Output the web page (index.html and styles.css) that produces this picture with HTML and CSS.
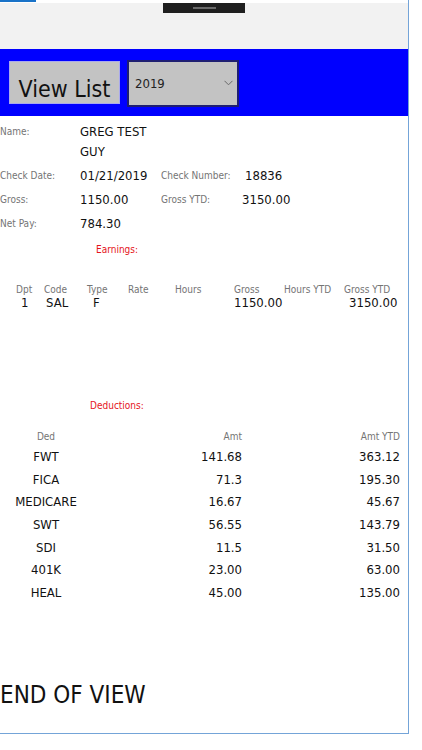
FILE: index.html
```html
<!DOCTYPE html>
<html lang="en">
<head>
<meta charset="utf-8">
<title>Pay Stub</title>
<link rel="stylesheet" href="styles.css">
</head>
<body>
<div class="window">
  <div class="topstrip"><span class="accent"></span></div>
  <div class="titlebar"><div class="handle"><span class="grip"></span></div></div>
  <div class="toolbar">
    <button class="btn">View List</button>
    <div class="select">
      <span class="select-text">2019</span>
      <svg class="chev" width="9" height="6" viewBox="0 0 9 6"><path d="M0.5 0.8 L4.5 4.8 L8.5 0.8" fill="none" stroke="#6a6a6a" stroke-width="1"/></svg>
    </div>
  </div>
  <div class="content">
    <div class="info">
      <div class="row name-row">
        <span class="lbl">Name:</span>
        <span class="val name">GREG TEST<br>GUY</span>
      </div>
      <div class="row">
        <span class="lbl">Check Date:</span>
        <span class="val">01/21/2019</span>
        <span class="lbl">Check Number:</span>
        <span class="val shift">18836</span>
      </div>
      <div class="row">
        <span class="lbl">Gross:</span>
        <span class="val">1150.00</span>
        <span class="lbl">Gross YTD:</span>
        <span class="val">3150.00</span>
      </div>
      <div class="row">
        <span class="lbl">Net Pay:</span>
        <span class="val">784.30</span>
      </div>
    </div>
    <div class="section-title earn-title">Earnings:</div>
    <div class="earn-table">
      <span class="eh">Dpt</span><span class="eh">Code</span><span class="eh">Type</span><span class="eh">Rate</span><span class="eh">Hours</span><span class="eh">Gross</span><span class="eh">Hours YTD</span><span class="eh">Gross YTD</span>
      <span class="ev c-dpt">1</span><span class="ev c-code">SAL</span><span class="ev c-type">F</span><span class="ev"></span><span class="ev"></span><span class="ev">1150.00</span><span class="ev"></span><span class="ev c-gytd">3150.00</span>
    </div>
    <div class="section-title ded-title">Deductions:</div>
    <div class="ded-table">
      <div class="drow dhead"><span class="d-name">Ded</span><span class="d-amt">Amt</span><span class="d-ytd">Amt YTD</span></div>
      <div class="drow"><span class="d-name">FWT</span><span class="d-amt">141.68</span><span class="d-ytd">363.12</span></div>
      <div class="drow"><span class="d-name">FICA</span><span class="d-amt">71.3</span><span class="d-ytd">195.30</span></div>
      <div class="drow"><span class="d-name">MEDICARE</span><span class="d-amt">16.67</span><span class="d-ytd">45.67</span></div>
      <div class="drow"><span class="d-name">SWT</span><span class="d-amt">56.55</span><span class="d-ytd">143.79</span></div>
      <div class="drow"><span class="d-name">SDI</span><span class="d-amt">11.5</span><span class="d-ytd">31.50</span></div>
      <div class="drow"><span class="d-name">401K</span><span class="d-amt">23.00</span><span class="d-ytd">63.00</span></div>
      <div class="drow"><span class="d-name">HEAL</span><span class="d-amt">45.00</span><span class="d-ytd">135.00</span></div>
    </div>
    <div class="end">END OF VIEW</div>
  </div>
</div>
</body>
</html>
```
FILE: styles.css
```css
* { box-sizing: border-box; }
html, body { margin: 0; padding: 0; background: #ffffff; }
body {
  font-family: "DejaVu Sans Condensed", "DejaVu Sans", "Liberation Sans", sans-serif;
  color: #111111;
}
.window {
  width: 409px;
  height: 734px;
  border-right: 1px solid #74a4d8;
  border-bottom: 1px solid #74a4d8;
  display: flex;
  flex-direction: column;
  overflow: hidden;
  background: #ffffff;
}
.topstrip { height: 3px; background: #ffffff; }
.accent { display: block; width: 36px; height: 2px; background: #1a73c8; }
.titlebar {
  height: 46px;
  background: #f2f2f2;
  display: flex;
  justify-content: center;
  align-items: flex-start;
}
.handle {
  width: 82px;
  height: 10px;
  background: #1f1f1f;
  display: flex;
  justify-content: center;
  align-items: center;
}
.grip { width: 23px; height: 2px; background: #6a6a6a; }
.toolbar {
  height: 67px;
  background: #0000ff;
  display: flex;
  align-items: flex-start;
  gap: 7px;
  padding: 12px 0 0 9px;
}
.btn {
  width: 111px;
  height: 43px;
  margin: 0;
  padding: 12px 0 0 0;
  border: 1px solid #a9a9ee;
  background: #c3c3c3;
  font-family: inherit;
  font-size: 23px;
  line-height: 28px;
  color: #111111;
  text-align: center;
  white-space: nowrap;
  overflow: hidden;
  display: block;
}
.select {
  width: 112px;
  height: 47px;
  margin-top: -1px;
  border: 2px solid #1e1e72;
  background: #c3c3c3;
  display: flex;
  align-items: center;
  justify-content: space-between;
  padding: 0 4px 0 6px;
}
.select-text { font-size: 13px; color: #222222; }
.chev { margin-bottom: 2px; }
.content { display: flex; flex-direction: column; padding-top: 6px; }
.info { display: flex; flex-direction: column; }
.row {
  display: grid;
  grid-template-columns: 80px 81px 81px 1fr;
  align-items: center;
  height: 24px;
}
.name-row { height: 40px; align-items: start; margin-bottom: 2px; }
.lbl { font-size: 10px; color: #747474; line-height: 20px; white-space: nowrap; }
.val { font-size: 13px; line-height: 20px; color: #111111; white-space: nowrap; }
.shift { padding-left: 3px; }
.section-title { font-size: 10px; color: #e5141b; }
.earn-title { padding-left: 96px; height: 24px; line-height: 24px; margin-top: 2px; }
.earn-table {
  margin-top: 21px;
  padding-left: 16px;
  display: grid;
  grid-template-columns: 28px 43px 41px 47px 59px 50px 60px 64px;
}
.eh { font-size: 10px; color: #747474; line-height: 14px; white-space: nowrap; }
.ev { font-size: 13px; line-height: 12px; color: #111111; white-space: nowrap; }
.c-dpt { padding-left: 5px; }
.c-code { padding-left: 2px; }
.c-type { padding-left: 6px; }
.c-gytd { padding-left: 5px; }
.ded-title { padding-left: 90px; line-height: 16px; margin-top: 89px; }
.ded-table { margin-top: 13px; display: flex; flex-direction: column; }
.drow {
  display: grid;
  grid-template-columns: 92px 150px 158px;
  height: 22.7px;
  align-items: center;
  font-size: 13px;
}
.dhead { height: 18px; font-size: 10px; color: #747474; }
.d-name { text-align: center; }
.d-amt, .d-ytd { text-align: right; }
.end { margin-top: 74px; font-size: 24px; line-height: 34px; color: #111111; }
```
